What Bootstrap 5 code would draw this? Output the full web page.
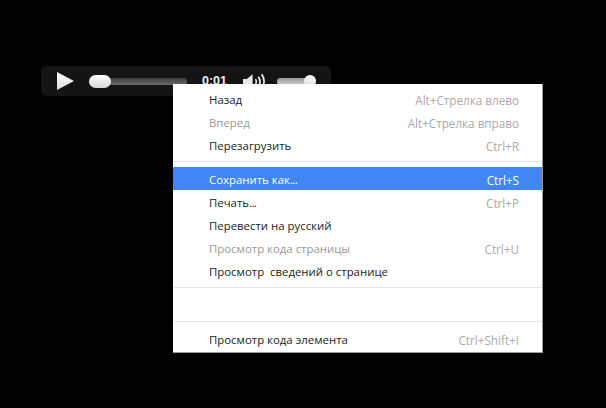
<!DOCTYPE html>
<html lang="ru">
<head>
<meta charset="utf-8">
<title>Audio</title>
<link href="https://cdn.jsdelivr.net/npm/bootstrap@5.3.0/dist/css/bootstrap.min.css" rel="stylesheet">
<style>
html,body{background:#000;height:100%;margin:0;overflow:hidden}
.stage{position:relative;width:606px;height:408px;padding:66px 0 0 41px}
.player{width:290px;height:30px;background:#141414;border-radius:5px;padding-left:16px;color:#fff}
.play-ico{width:17px;height:18px;flex:none}
.track{width:98px;height:7px;margin-left:15px;background:linear-gradient(#3c3c3c,#6a6a6a);border-radius:4px;position:relative;flex:none}
.knob-a{position:absolute;left:0;top:-3px;width:22px;height:13px;border-radius:7px;background:linear-gradient(#fff,#d8d8d8)}
.time{font:700 12.5px "Liberation Sans",sans-serif;margin-left:15px;width:26px;color:#e8eef2}
.vol-ico{width:23px;height:17px;margin-left:15px;flex:none}
.vol{width:39px;height:7px;margin-left:11px;background:linear-gradient(#999,#ccc);border-radius:4px;position:relative;flex:none}
.knob-b{position:absolute;right:0;top:-3px;width:12px;height:12px;border-radius:50%;background:linear-gradient(#fff,#ddd)}
.ctx{position:absolute;left:173px;top:84px;width:370px;height:269px;margin:0;padding:4px 0 0;min-width:0;background:#fff;border:0;border-right:1px solid #999;border-bottom:1px solid #999;border-radius:0;font:11.4px "Open Sans","Noto Sans",sans-serif;--bs-dropdown-font-size:11.4px;display:block}
.ctx li{list-style:none}
.ctx .dropdown-item{height:23px;padding:0 23px 0 36px;display:flex;justify-content:space-between;align-items:center;color:#222;white-space:pre}
.ctx .dropdown-item.nudged{padding-top:2px}
.ctx .dropdown-item.muted{color:#999}
.ctx .dropdown-item span+span{color:#aaa;font-size:11.7px}
.ctx .dropdown-item.sel{background:#4285f4;color:#fff}
.ctx .dropdown-item.sel span+span{color:#fff}
.ctx .dots{letter-spacing:-.6px}
.ctx .dropdown-divider{margin:0;border-top:1px solid #e4e4e4;opacity:1;height:0}
.ctx .div-a{margin:4px 0 5px}
.ctx .div-b{margin:5px 0 0}
.ctx .div-c{margin:0 0 6px}
.gap-row{height:33px}
</style>
</head>
<body>
<div class="stage">
  <div class="player d-flex align-items-center">
    <svg class="play-ico" viewBox="0 0 17 18"><defs><linearGradient id="g" x1="0" y1="0" x2="0" y2="1"><stop offset="0" stop-color="#fff"/><stop offset="1" stop-color="#dcdcdc"/></linearGradient></defs><path d="M0 0L17 9L0 18Z" fill="url(#g)"/></svg>
    <div class="track"><div class="knob-a"></div></div>
    <div class="time">0:01</div>
    <svg class="vol-ico" viewBox="0 0 24 17"><path d="M0 6H4L10 1V16L4 11H0Z" fill="#e8e8e8"/><path d="M13 6Q15 8.500 13 11" stroke="#eee" stroke-width="1.600" fill="none"/><path d="M16 3.500Q19.500 8.500 16 13.500" stroke="#eee" stroke-width="1.800" fill="none"/><path d="M19.500 1Q24.500 8.500 19.500 16" stroke="#eee" stroke-width="1.800" fill="none"/></svg>
    <div class="vol"><div class="knob-b"></div></div>
  </div>
  <ul class="dropdown-menu ctx">
    <li><div class="dropdown-item"><span>Назад</span><span>Alt+Стрелка влево</span></div></li>
    <li><div class="dropdown-item muted"><span>Вперед</span><span>Alt+Стрелка вправо</span></div></li>
    <li><div class="dropdown-item"><span>Перезагрузить</span><span>Ctrl+R</span></div></li>
    <li><hr class="dropdown-divider div-a"></li>
    <li><div class="dropdown-item sel nudged"><span>Сохранить как<i class="dots fst-normal">...</i></span><span>Ctrl+S</span></div></li>
    <li><div class="dropdown-item nudged"><span>Печать<i class="dots fst-normal">...</i></span><span>Ctrl+P</span></div></li>
    <li><div class="dropdown-item nudged"><span>Перевести на русский</span></div></li>
    <li><div class="dropdown-item muted nudged"><span>Просмотр кода страницы</span><span>Ctrl+U</span></div></li>
    <li><div class="dropdown-item nudged"><span>Просмотр  сведений о странице</span></div></li>
    <li><hr class="dropdown-divider div-b"></li>
    <li class="gap-row"></li>
    <li><hr class="dropdown-divider div-c"></li>
    <li><div class="dropdown-item"><span>Просмотр кода элемента</span><span>Ctrl+Shift+I</span></div></li>
  </ul>
</div>
<script src="https://cdn.jsdelivr.net/npm/bootstrap@5.3.0/dist/js/bootstrap.bundle.min.js"></script>
</body>
</html>
